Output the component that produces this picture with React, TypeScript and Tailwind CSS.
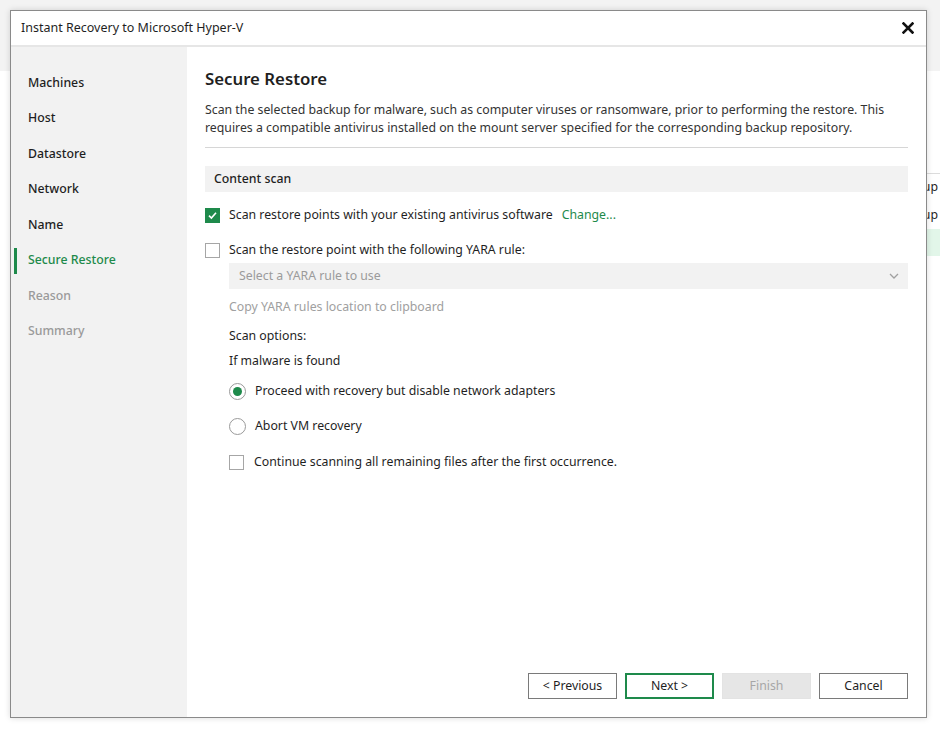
import React from "react";

const GREEN = "#1e8a4b";

function Checkbox({ checked }: { checked?: boolean }) {
  return checked ? (
    <span className="flex h-[15px] w-[15px] shrink-0 items-center justify-center bg-[#1e8a4b]">
      <svg width="11" height="11" viewBox="0 0 11 11">
        <path d="M2 5.6 L4.4 8 L9 2.8" fill="none" stroke="white" strokeWidth="1.6" />
      </svg>
    </span>
  ) : (
    <span className="h-[15px] w-[15px] shrink-0 border border-[#a6a6a6] bg-white" />
  );
}

function Radio({ checked }: { checked?: boolean }) {
  return (
    <span className="flex h-[17px] w-[17px] shrink-0 items-center justify-center rounded-full border border-[#9a9a9a] bg-white">
      {checked && <span className="h-[9px] w-[9px] rounded-full bg-[#1e8a4b]" />}
    </span>
  );
}

const steps = [
  { label: "Machines", state: "done" },
  { label: "Host", state: "done" },
  { label: "Datastore", state: "done" },
  { label: "Network", state: "done" },
  { label: "Name", state: "done" },
  { label: "Secure Restore", state: "active" },
  { label: "Reason", state: "todo" },
  { label: "Summary", state: "todo" },
];

export default function App() {
  return (
    <div className="relative h-[730px] w-[940px] overflow-hidden bg-white text-[12.3px] text-[#1f1f1f] font-['Noto_Sans',sans-serif]">
      {/* background application */}
      <div className="h-[71px] bg-[#f3f3f3]" />
      <div className="ml-auto mt-[102px] w-[60px] border-t border-[#dcdcdc]">
        <div className="flex h-[27px] items-center justify-end pr-[2px]">Backup</div>
        <div className="flex h-[28px] items-center justify-end pr-[2px]">Backup</div>
        <div className="h-[27px] bg-[#e2f6e9]" />
      </div>

      {/* dialog window */}
      <div className="absolute left-[10px] top-[10px] flex h-[708px] w-[917px] flex-col border border-[#8a8a8a] bg-white shadow-[0_0_6px_rgba(0,0,0,0.15)]">
        <div className="flex h-[36px] shrink-0 items-center justify-between border-b-2 border-[#e6e6e6] pl-[10px] pr-[12px]">
          <span className="text-[12.5px]">Instant Recovery to Microsoft Hyper-V</span>
          <svg width="12" height="12" viewBox="0 0 12 12">
            <path d="M1.5 1.5 L10.5 10.5 M10.5 1.5 L1.5 10.5" stroke="#111" strokeWidth="2.6" strokeLinecap="square" />
          </svg>
        </div>
        <div className="flex min-h-0 flex-1">
          {/* sidebar */}
          <div className="w-[176px] shrink-0 bg-[#f2f2f2] pt-[18px]">
            {steps.map((s) => (
              <div key={s.label} className="relative flex h-[35.5px] items-center pl-[17px]">
                {s.state === "active" && (
                  <span className="absolute left-[3px] top-[5px] h-[26px] w-[3px] bg-[#1e8a4b]" />
                )}
                <span
                  className={
                    s.state === "active"
                      ? "font-medium text-[#1e8a4b]"
                      : s.state === "done"
                      ? "font-medium text-[#1f1f1f]"
                      : "font-medium text-[#9a9a9a]"
                  }
                >
                  {s.label}
                </span>
              </div>
            ))}
          </div>

          {/* content */}
          <div className="flex min-w-0 flex-1 flex-col pl-[18px] pr-[18px]">
            <div className="mt-[20px] text-[16.8px] font-semibold leading-[24px]">Secure Restore</div>
            <div className="mt-[10px] leading-[18px] text-[#333]">
              Scan the selected backup for malware, such as computer viruses or ransomware, prior to performing the restore. This requires a compatible antivirus installed on the mount server specified for the corresponding backup repository.
            </div>
            <div className="mt-[10px] h-px bg-[#d6d6d6]" />
            <div className="mt-[18px] flex h-[26px] items-center bg-[#f2f2f2] pl-[9px] font-medium">Content scan</div>

            <div className="mt-[12px] flex h-[22px] items-center">
              <Checkbox checked />
              <span className="ml-[9px]">Scan restore points with your existing antivirus software</span>
              <span className="ml-[9px]" style={{ color: GREEN }}>Change...</span>
            </div>
            <div className="mt-[13px] flex h-[22px] items-center">
              <Checkbox />
              <span className="ml-[9px]">Scan the restore point with the following YARA rule:</span>
            </div>

            <div className="ml-[24px] mt-[2px] flex h-[26px] items-center justify-between bg-[#f2f2f2] pl-[10px] pr-[9px] text-[#9b9b9b]">
              <span>Select a YARA rule to use</span>
              <svg width="10" height="6" viewBox="0 0 10 6">
                <path d="M1 1 L5 5 L9 1" fill="none" stroke="#a0a0a0" strokeWidth="1.3" />
              </svg>
            </div>

            <div className="ml-[24px] mt-[8px] flex h-[20px] items-center text-[#a0a0a0]">Copy YARA rules location to clipboard</div>
            <div className="ml-[24px] mt-[9px] flex h-[20px] items-center">Scan options:</div>
            <div className="ml-[24px] mt-[5px] flex h-[20px] items-center">If malware is found</div>

            <div className="ml-[24px] mt-[9px] flex h-[22px] items-center">
              <Radio checked />
              <span className="ml-[9px]">Proceed with recovery but disable network adapters</span>
            </div>
            <div className="ml-[24px] mt-[13px] flex h-[22px] items-center">
              <Radio />
              <span className="ml-[9px]">Abort VM recovery</span>
            </div>
            <div className="ml-[24px] mt-[14px] flex h-[22px] items-center">
              <Checkbox />
              <span className="ml-[10px]">Continue scanning all remaining files after the first occurrence.</span>
            </div>

            <div className="mt-auto mb-[18px] flex justify-end gap-[8px]">
              <button className="h-[26px] w-[89px] border border-[#7a7a7a] bg-white">&lt; Previous</button>
              <button className="h-[26px] w-[89px] border-2 border-[#1e8a4b] bg-white">Next &gt;</button>
              <button className="h-[26px] w-[89px] border border-[#e3e3e3] bg-[#e6e6e6] text-[#a6a6a6]">Finish</button>
              <button className="h-[26px] w-[89px] border border-[#7a7a7a] bg-white">Cancel</button>
            </div>
          </div>
        </div>
      </div>
    </div>
  );
}
